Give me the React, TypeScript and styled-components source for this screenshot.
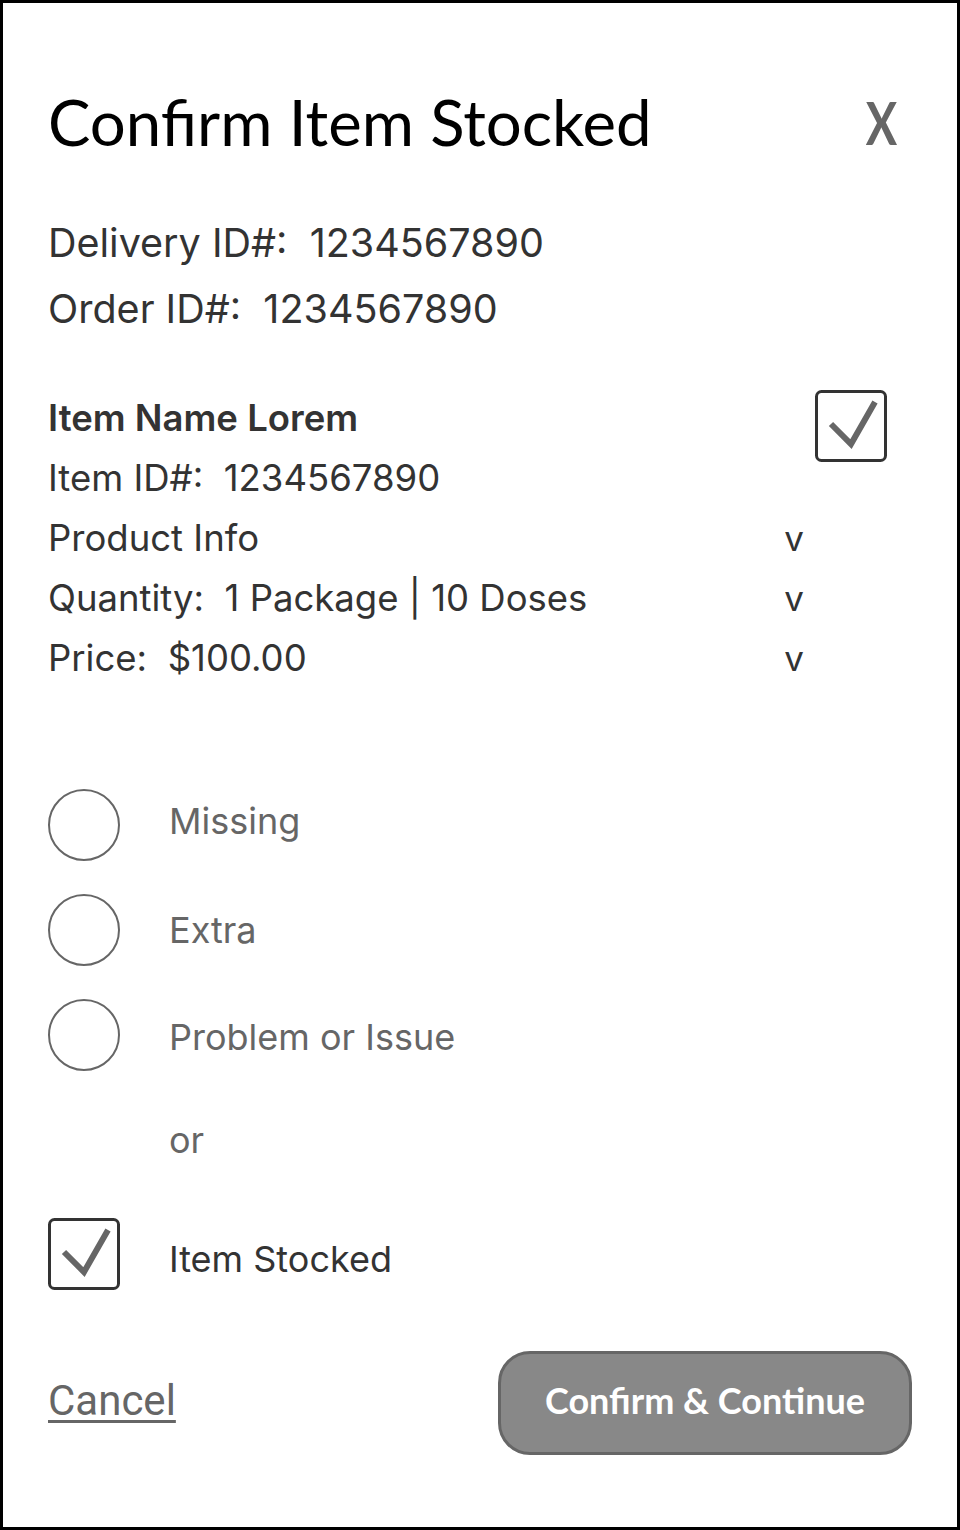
import React from 'react';
import styled, { createGlobalStyle } from 'styled-components';

/**
 * Define stylesheet.
 */
const GlobalStyle = createGlobalStyle`
    html, body {
        margin: 0;
        padding: 0;
        background-color: #fff;
    }
    * {
        box-sizing: border-box;
    }
`;
const Page = styled.div`
    display: flex;
    flex-direction: column;
    width: 960px;
    height: 1530px;
    padding: 79px 45px 0 45px;
    border: 3px solid #000;
    background-color: #fff;
    font-family: Inter, "Noto Sans", sans-serif;
    color: #333;
`;
const Header = styled.header`
    display: flex;
    justify-content: space-between;
    align-items: flex-start;
    padding-right: 15px;
`;
const Title = styled.h1`
    margin: 0;
    font-family: Lato, "Open Sans", sans-serif;
    font-size: 63.5px;
    font-weight: 400;
    line-height: 80px;
    color: #000;
`;
const Close = styled.button`
    padding: 0;
    border: 0;
    background-color: transparent;
    font-family: Lato, "Open Sans", sans-serif;
    font-size: 60px;
    font-weight: 700;
    line-height: 80px;
    color: #666;
    transform: scaleX(0.78);
    transform-origin: right center;
    cursor: pointer;
`;
const Ids = styled.div`
    margin-top: 48px;
`;
const IdRow = styled.div`
    font-size: 39.5px;
    line-height: 66px;
    white-space: pre;
`;
const ItemSection = styled.section`
    display: flex;
    align-items: flex-start;
    gap: 11px;
    margin-top: 46px;
    padding-right: 25px;
`;
const ItemList = styled.div`
    flex: 1;
`;
const ItemRow = styled.div<{ bold?: boolean }>`
    display: flex;
    justify-content: space-between;
    font-size: 36.5px;
    font-weight: ${(props) => props.bold ? 600 : 400};
    line-height: 60px;
    white-space: pre;
`;
const Chevron = styled.span`
    font-size: 35px;
`;
const Box = styled.div<{ top?: number }>`
    flex-shrink: 0;
    width: 72px;
    height: 72px;
    margin-top: ${(props) => props.top || 0}px;
`;
const Choices = styled.div`
    display: flex;
    flex-direction: column;
    gap: 33px;
    margin-top: 101px;
`;
const Choice = styled.label`
    display: flex;
    align-items: center;
    gap: 49px;
    height: 72px;
`;
const Radio = styled.span`
    flex-shrink: 0;
    width: 72px;
    height: 72px;
    border: 2.5px solid #666;
    border-radius: 50%;
`;
const ChoiceLabel = styled.span<{ dark?: boolean; shift?: number }>`
    position: relative;
    top: ${(props) => props.shift || 0}px;
    font-size: 36px;
    color: ${(props) => props.dark ? '#333' : '#666'};
`;
const Or = styled.div`
    margin: 39px 0 48px;
    padding-left: 121px;
    font-size: 36px;
    line-height: 60px;
    color: #666;
`;
const Footer = styled.footer`
    display: flex;
    justify-content: space-between;
    align-items: center;
    margin-top: 61px;
`;
const Cancel = styled.a`
    margin-bottom: 6px;
    font-family: Roboto, Inter, sans-serif;
    font-size: 42px;
    color: #666;
    text-decoration: underline;
    text-decoration-thickness: 3px;
    text-underline-offset: 5px;
    cursor: pointer;
`;
const PrimaryButton = styled.button`
    width: 414px;
    height: 104px;
    padding-bottom: 8px;
    border: 3px solid #666;
    border-radius: 32px;
    background-color: #888;
    font-family: Lato, "Open Sans", sans-serif;
    font-size: 36px;
    font-weight: 700;
    color: #fff;
    cursor: pointer;
`;

/**
 * Define component.
 */
function CheckBox(props: { top?: number }) {
    return (
        <Box top={props.top}>
            <svg width="72" height="72" viewBox="0 0 72 72">
                <rect x="1.5" y="1.5" width="69" height="69" rx="5" fill="none" stroke="#333" strokeWidth="3" />
                <polyline points="16,34 36,54 60,12" fill="none" stroke="#666" strokeWidth="6" />
            </svg>
        </Box>
    );
}

export default function App() {
    const details = [
        'Product Info',
        'Quantity:  1 Package | 10 Doses',
        'Price:  $100.00'
    ];
    const choices = [
        { label: 'Missing', shift: -4 },
        { label: 'Extra', shift: 0 },
        { label: 'Problem or Issue', shift: 2 }
    ];
    return (
        <>
            <GlobalStyle />
            <Page>
                <Header>
                    <Title>Confirm Item Stocked</Title>
                    <Close aria-label="Close">X</Close>
                </Header>
                <Ids>
                    <IdRow>Delivery ID#:  1234567890</IdRow>
                    <IdRow>Order ID#:  1234567890</IdRow>
                </Ids>
                <ItemSection>
                    <ItemList>
                        <ItemRow bold>Item Name Lorem</ItemRow>
                        <ItemRow>Item ID#:  1234567890</ItemRow>
                        {details.map((label) => (
                            <ItemRow key={label}>
                                {label}
                                <Chevron>v</Chevron>
                            </ItemRow>
                        ))}
                    </ItemList>
                    <CheckBox top={2} />
                </ItemSection>
                <Choices>
                    {choices.map((choice) => (
                        <Choice key={choice.label}>
                            <Radio />
                            <ChoiceLabel shift={choice.shift}>{choice.label}</ChoiceLabel>
                        </Choice>
                    ))}
                </Choices>
                <Or>or</Or>
                <Choice>
                    <CheckBox />
                    <ChoiceLabel dark shift={5}>Item Stocked</ChoiceLabel>
                </Choice>
                <Footer>
                    <Cancel>Cancel</Cancel>
                    <PrimaryButton>Confirm &amp; Continue</PrimaryButton>
                </Footer>
            </Page>
        </>
    );
}
